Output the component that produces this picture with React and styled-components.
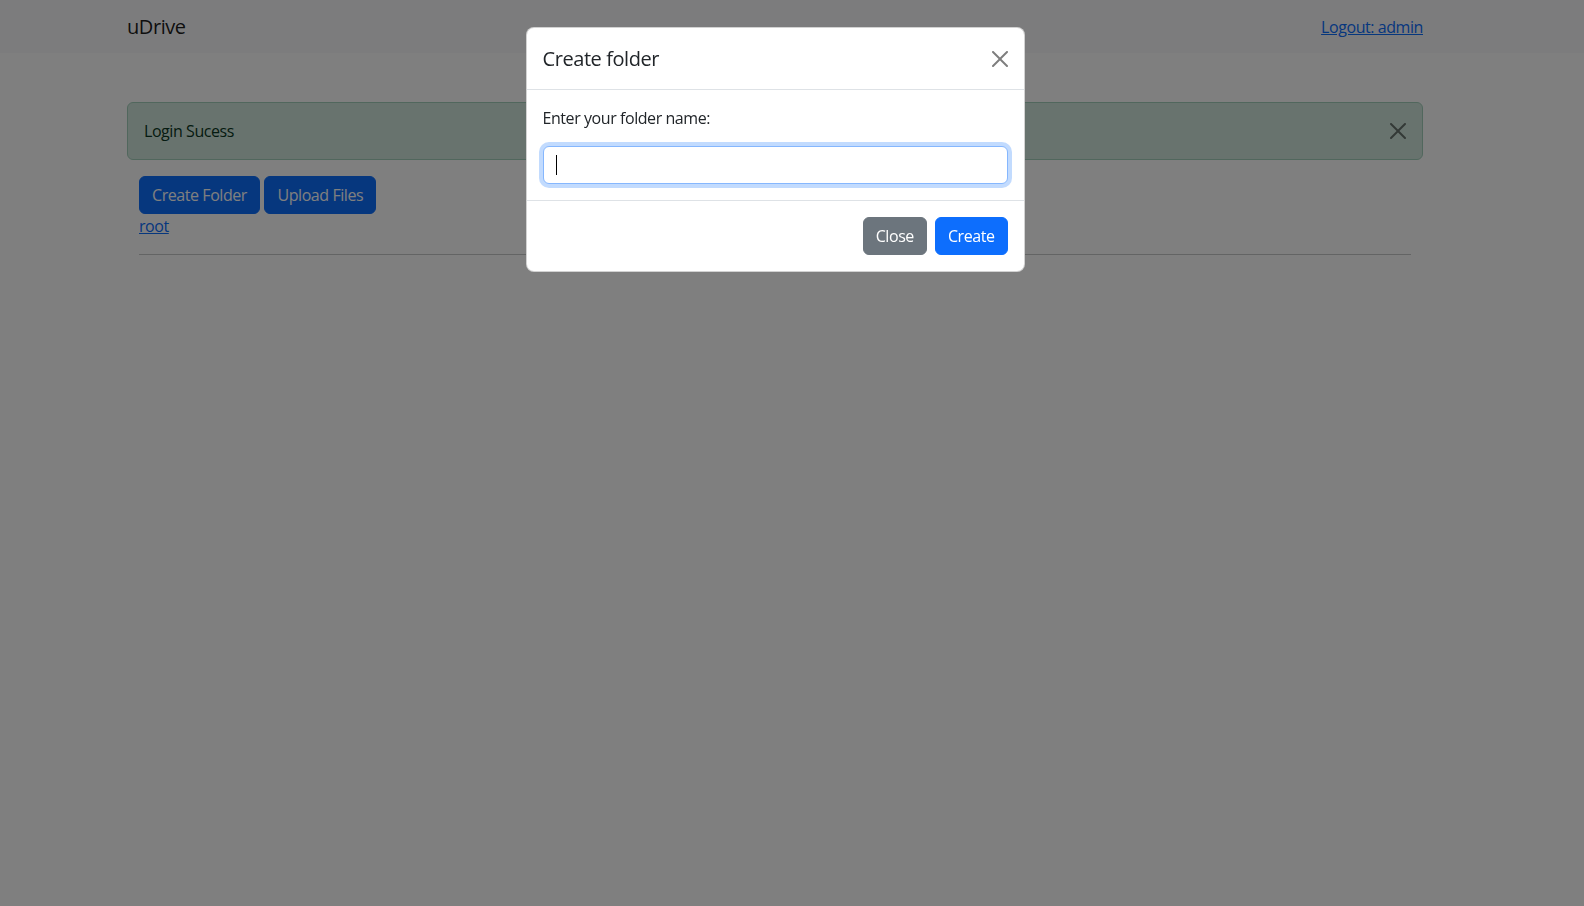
import React from "react";
import styled, { createGlobalStyle } from "styled-components";

const GlobalStyle = createGlobalStyle`
  *, *::before, *::after { box-sizing: border-box; }
  html, body { margin: 0; padding: 0; }
  body {
    font-family: "Open Sans", "Noto Sans", sans-serif;
    font-size: 16px;
    line-height: 1.5;
    letter-spacing: -0.027em;
    color: #212529;
    background: #ffffff;
    overflow: hidden;
  }
`;

const Shell = styled.div`
  min-height: 906px;
`;

const Navbar = styled.nav`
  background: #f8f9fa;
  height: 53px;
  padding-right: 34px;
  display: flex;
  align-items: center;
`;

const Container = styled.div`
  width: 100%;
  max-width: 1320px;
  margin: 0 auto;
  padding: 0 12px;
`;

const NavContent = styled(Container)`
  display: flex;
  align-items: center;
  justify-content: space-between;
`;

const Brand = styled.span`
  font-size: 20px;
  line-height: 30px;
  color: rgba(0, 0, 0, 0.9);
`;

const Link = styled.a`
  color: #0d6efd;
  text-decoration: underline;
  font-size: 16px;
  line-height: 24px;
  display: ${(p) => (p.$block ? "block" : "inline")};
  width: fit-content;
`;

const Main = styled.main`
  padding-right: 34px;
  padding-top: 49px;
`;

const Inner = styled.div`
  padding: 0 12px;
`;

const Alert = styled.div`
  position: relative;
  background: #d1e7dd;
  border: 1px solid #a3cfbb;
  color: #0a3622;
  border-radius: 6px;
  padding: 16px 48px 16px 16px;
  margin-bottom: 16px;
`;

const IconButton = styled.button`
  border: 0;
  background: transparent;
  padding: ${(p) => p.$pad || "8px"};
  display: flex;
  cursor: pointer;
  opacity: 0.5;
  ${(p) => (p.$corner ? "position: absolute; top: 0; right: 0;" : "margin: -8px -8px -8px auto;")}
`;

const Toolbar = styled.div`
  display: flex;
  gap: 4.5px;
`;

const Button = styled.button`
  font-family: inherit;
  letter-spacing: inherit;
  font-size: 16px;
  line-height: 24px;
  padding: 6px 12px;
  border-radius: 6px;
  border: 1px solid ${(p) => p.$bg};
  background: ${(p) => p.$bg};
  color: #fff;
  cursor: pointer;
`;

const Rule = styled.hr`
  margin: 16px 0;
  border: 0;
  border-top: 1px solid #212529;
  opacity: 0.25;
`;

const Backdrop = styled.div`
  position: fixed;
  inset: 0;
  background: rgba(0, 0, 0, 0.5);
`;

const ModalLayer = styled.div`
  position: fixed;
  inset: 0;
  padding: 27px 34px 0 0;
  display: flex;
  justify-content: center;
  align-items: flex-start;
`;

const Dialog = styled.div`
  width: 499px;
  background: #fff;
  border: 1px solid rgba(0, 0, 0, 0.175);
  border-radius: 8px;
  display: flex;
  flex-direction: column;
`;

const ModalHeader = styled.div`
  display: flex;
  align-items: center;
  padding: 16px;
  border-bottom: 1px solid #dee2e6;
`;

const ModalTitle = styled.h5`
  margin: 0;
  font-size: 20px;
  font-weight: 500;
  line-height: 29px;
`;

const ModalBody = styled.div`
  padding: 16px;
`;

const Label = styled.label`
  display: block;
  margin-bottom: 16px;
`;

const InputWrap = styled.div`
  position: relative;
`;

const Input = styled.input`
  display: block;
  width: 100%;
  height: 38px;
  padding: 6px 12px;
  font: inherit;
  border: 1px solid #86b7fe;
  border-radius: 6px;
  box-shadow: 0 0 0 4px rgba(13, 110, 253, 0.25);
  outline: none;
  caret-color: transparent;
  color: #212529;
`;

const Caret = styled.span`
  position: absolute;
  left: 13px;
  top: 9px;
  width: 1px;
  height: 20px;
  background: #000;
`;

const ModalFooter = styled.div`
  display: flex;
  justify-content: flex-end;
  gap: 8px;
  padding: 16px;
  border-top: 1px solid #dee2e6;
`;

const CloseIcon = () => (
  <svg width="16" height="16" viewBox="0 0 16 16" fill="#000">
    <path d="M.293.293a1 1 0 0 1 1.414 0L8 6.586 14.293.293a1 1 0 1 1 1.414 1.414L9.414 8l6.293 6.293a1 1 0 0 1-1.414 1.414L8 9.414l-6.293 6.293a1 1 0 0 1-1.414-1.414L6.586 8 .293 1.707a1 1 0 0 1 0-1.414z" />
  </svg>
);

export default function App() {
  return (
    <>
      <GlobalStyle />
      <Shell>
        <Navbar>
          <NavContent>
            <Brand>uDrive</Brand>
            <Link href="#">Logout: admin</Link>
          </NavContent>
        </Navbar>
        <Main>
          <Container>
            <Alert>
              Login Sucess
              <IconButton $corner $pad="20px 16px" aria-label="Close">
                <CloseIcon />
              </IconButton>
            </Alert>
            <Inner>
              <Toolbar>
                <Button $bg="#0d6efd">Create Folder</Button>
                <Button $bg="#0d6efd">Upload Files</Button>
              </Toolbar>
              <Link href="#" $block>
                root
              </Link>
              <Rule />
            </Inner>
          </Container>
        </Main>
      </Shell>
      <Backdrop />
      <ModalLayer>
        <Dialog>
          <ModalHeader>
            <ModalTitle>Create folder</ModalTitle>
            <IconButton aria-label="Close">
              <CloseIcon />
            </IconButton>
          </ModalHeader>
          <ModalBody>
            <Label htmlFor="folder">Enter your folder name:</Label>
            <InputWrap>
              <Input id="folder" type="text" />
              <Caret />
            </InputWrap>
          </ModalBody>
          <ModalFooter>
            <Button $bg="#6c757d">Close</Button>
            <Button $bg="#0d6efd">Create</Button>
          </ModalFooter>
        </Dialog>
      </ModalLayer>
    </>
  );
}
